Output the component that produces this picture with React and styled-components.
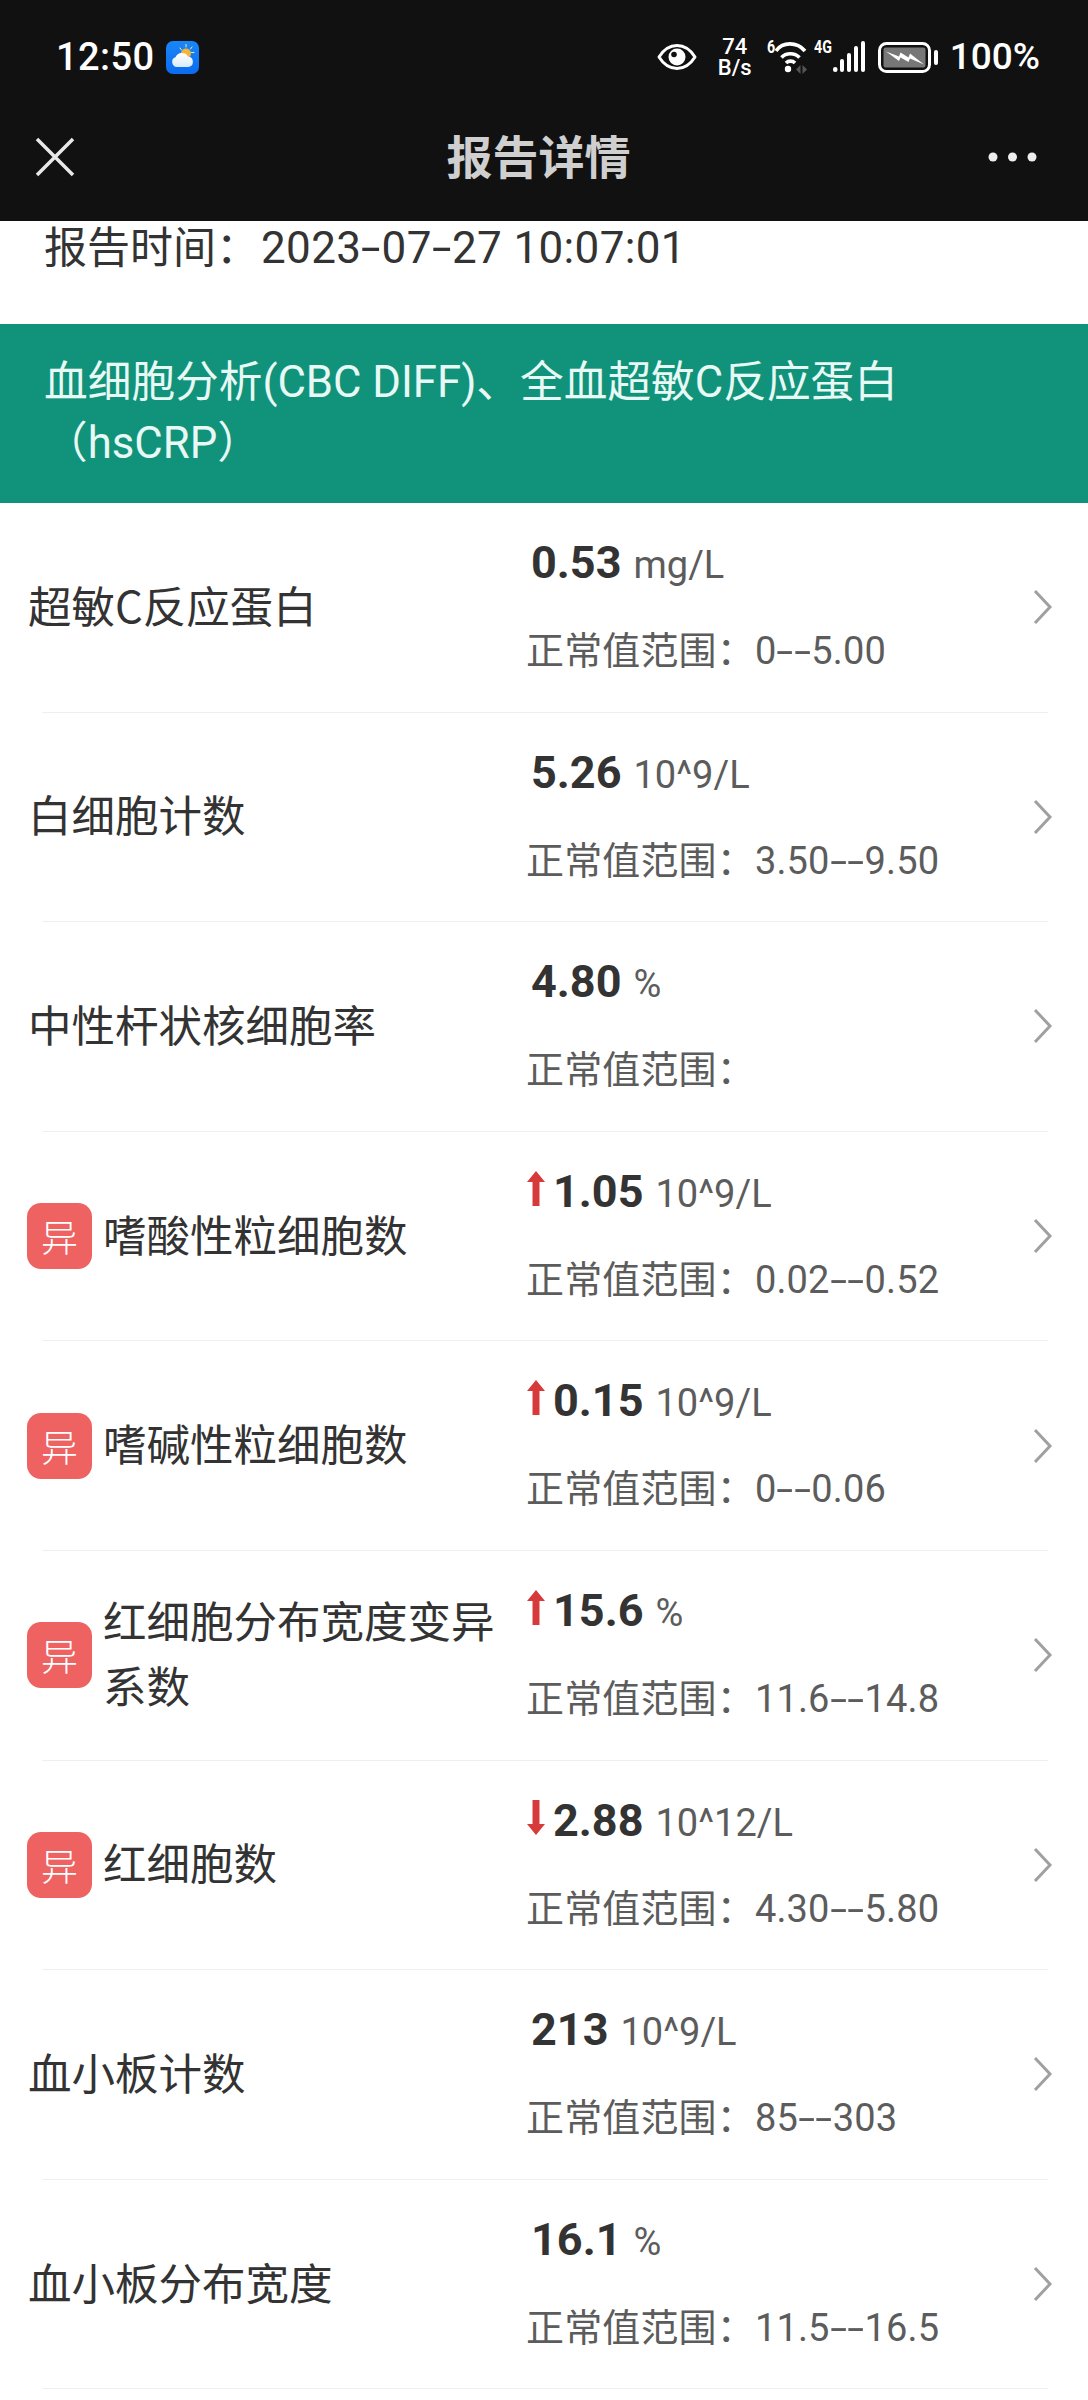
import React from "react";
import styled, { createGlobalStyle } from "styled-components";

const FONT = `Roboto, "Noto Sans CJK SC", sans-serif`;
const CJK = `"Noto Sans CJK SC", sans-serif`;

const Global = createGlobalStyle`
  html, body { margin: 0; padding: 0; background: #fff; }
  body { font-family: ${FONT}; }
  * { box-sizing: border-box; }
`;

const Page = styled.div`
  width: 1088px;
  height: 2400px;
  overflow: hidden;
  background: #fff;
`;

const TopBar = styled.header`
  height: 221px;
  background: #111111;
  display: flex;
  flex-direction: column;
`;

const StatusBar = styled.div`
  height: 113px;
  padding: 34px 48px 0 56px;
  display: flex;
  justify-content: space-between;
  align-items: flex-start;
  color: #fff;
`;

const StatusLeft = styled.div`
  display: flex;
  align-items: center;
  gap: 12px;
  height: 46px;
`;

const Time = styled.span`
  font-size: 38px;
  line-height: 46px;
  font-weight: 500;
  letter-spacing: 0.4px;
`;

const StatusRight = styled.div`
  display: flex;
  align-items: center;
  height: 46px;
`;

const Speed = styled.div`
  width: 36px;
  margin: 0 14px 0 20px;
  display: flex;
  flex-direction: column;
  align-items: center;
  font-size: 22px;
  line-height: 21px;
  font-weight: 500;
`;

const NetLabel = styled.span`
  flex: none;
  width: ${(p) => p.$w}px;
  align-self: flex-start;
  margin-top: 3px;
  font-size: 19px;
  line-height: 20px;
  font-weight: 700;
  white-space: nowrap;
  transform: scaleX(0.75);
  transform-origin: left center;
`;

const Percent = styled.span`
  font-size: 37px;
  line-height: 46px;
  font-weight: 500;
  margin-left: 12px;
`;

const NavBar = styled.nav`
  height: 108px;
  padding: 0 51px 0 35px;
  display: flex;
  align-items: flex-start;
  justify-content: space-between;
`;

const NavTitle = styled.h1`
  margin: 0 0 0 14px;
  font-size: 46px;
  line-height: 60px;
  font-weight: 700;
  color: #cfcfcf;
  padding-top: 11px;
  font-family: ${CJK};
`;

const NavIcon = styled.svg`
  display: block;
  margin-top: 24px;
`;

const ReportTime = styled.div`
  height: 103px;
  padding: 3px 0 0 44px;
  font-size: 43px;
  line-height: 48px;
  color: #333;
  font-weight: 400;
`;

const DateText = styled.span`
  margin-left: 2px;
  font-size: 44px;
  letter-spacing: 0.35px;
`;

const Hyphen = styled.span`
  display: inline-block;
  width: 0.46em;
  text-align: center;
  transform: scaleX(1.6);
`;

const Band = styled.div`
  height: 179px;
  padding: 28px 130px 0 44px;
  background: #10937a;
  color: #e8f8f4;
  font-size: 43.7px;
  line-height: 61px;
`;

const Row = styled.div`
  height: 208.6px;
  padding-left: 28px;
  display: flex;
  align-items: center;
`;

const Separator = styled.div`
  height: 1px;
  margin: 0 40px 0 42px;
  background: #efefef;
`;

const NameCell = styled.div`
  width: 499px;
  padding: 0 20px 6px 0;
  display: flex;
  align-items: center;
  gap: 11px;
  font-size: 43.5px;
  line-height: 65px;
  color: #333;
  font-family: ${CJK};
`;

const Badge = styled.span`
  flex: none;
  width: 65px;
  height: 66px;
  margin: 6px 0 0 -1px;
  border-radius: 14px;
  background: #ee6262;
  color: #fff;
  font-size: 37px;
  font-weight: 300;
  line-height: 66px;
  text-align: center;
  font-family: ${CJK};
`;

const ValueCell = styled.div`
  flex: 1;
  height: 100%;
  padding-top: 35px;
  display: flex;
  flex-direction: column;
`;

const ValueLine = styled.div`
  height: 50px;
  display: flex;
  align-items: baseline;
  padding-left: ${(p) => (p.$flagged ? 0 : 4)}px;
  margin-bottom: 38px;
`;

const Arrow = styled.svg`
  flex: none;
  align-self: flex-start;
  margin: 4px 8px 0 0;
`;

const Number = styled.b`
  font-size: 45px;
  line-height: 50px;
  font-weight: 700;
  color: #333;
`;

const Unit = styled.span`
  margin-left: 12px;
  font-size: 38px;
  line-height: 50px;
  color: #5c5c5c;
`;

const Range = styled.div`
  margin-left: -1px;
  font-size: 38px;
  line-height: 50px;
  letter-spacing: 0.15px;
  color: #5c5c5c;
`;

const Chevron = styled.svg`
  flex: none;
  margin-right: 34px;
`;

const rows = [
  { name: "超敏C反应蛋白", value: "0.53", unit: "mg/L", range: "0--5.00" },
  { name: "白细胞计数", value: "5.26", unit: "10^9/L", range: "3.50--9.50" },
  { name: "中性杆状核细胞率", value: "4.80", unit: "%", range: "" },
  { name: "嗜酸性粒细胞数", value: "1.05", unit: "10^9/L", range: "0.02--0.52", flag: "up" },
  { name: "嗜碱性粒细胞数", value: "0.15", unit: "10^9/L", range: "0--0.06", flag: "up" },
  { name: "红细胞分布宽度变异系数", value: "15.6", unit: "%", range: "11.6--14.8", flag: "up" },
  { name: "红细胞数", value: "2.88", unit: "10^12/L", range: "4.30--5.80", flag: "down" },
  { name: "血小板计数", value: "213", unit: "10^9/L", range: "85--303" },
  { name: "血小板分布宽度", value: "16.1", unit: "%", range: "11.5--16.5" },
];

const withHyphens = (text) =>
  text.split(/(-)/).map((part, i) => (part === "-" ? <Hyphen key={i}>-</Hyphen> : part));

const WeatherIcon = () => (
  <svg width="33" height="33" viewBox="0 0 33 33">
    <defs>
      <linearGradient id="sky" x1="0" y1="0" x2="0" y2="1">
        <stop offset="0" stopColor="#1a86f8" />
        <stop offset="1" stopColor="#0a6cf0" />
      </linearGradient>
      <linearGradient id="cloud" x1="0" y1="0" x2="0" y2="1">
        <stop offset="0" stopColor="#ffffff" />
        <stop offset="1" stopColor="#d9ecfb" />
      </linearGradient>
    </defs>
    <rect width="33" height="33" rx="7" fill="url(#sky)" />
    <g stroke="#ffe9a8" strokeWidth="1" strokeLinecap="round">
      <path d="M14 7l1.500 2M20 3.500v2.500M26 6l-1.500 2M28 11.500h-2.500" />
    </g>
    <circle cx="20" cy="12.500" r="5" fill="#f4b63a" />
    <path d="M11 26a5 5 0 0 1-1.500-9.700A7 7 0 0 1 22 15.500a5.300 5.300 0 0 1 .5 10.500z" fill="url(#cloud)" />
  </svg>
);

const EyeIcon = () => (
  <svg width="40" height="28" viewBox="0 0 40 28">
    <path d="M2 14C7 6 13 2.500 20 2.500S33 6 38 14c-5 8-11 11.500-18 11.500S7 22 2 14z" fill="none" stroke="#fff" strokeWidth="3" strokeLinejoin="round" />
    <circle cx="20" cy="14" r="8.500" fill="#fff" />
    <circle cx="17" cy="11.500" r="2.800" fill="#111" />
  </svg>
);

const WifiIcon = () => (
  <svg width="39" height="34" viewBox="0 0 39 34">
    <g fill="none" stroke="#fff" strokeWidth="3.600">
      <path d="M1 11C7.500 1.500 22 1.500 30 11" />
      <path d="M6.500 17.500c4.500-5 13-5 18 0" />
      <path d="M11 23c2.500-2.500 6.500-2.500 9 0" />
    </g>
    <circle cx="13" cy="29" r="3.200" fill="#fff" />
    <path d="M21 29.500l4.500-4.500v9zM27.500 25l4.500 4.500-4.500 4.500z" fill="#555" />
  </svg>
);

const SignalIcon = () => (
  <svg width="34" height="34" viewBox="0 0 34 34">
    <g fill="#fff">
      <rect x="1" y="27" width="4.500" height="5" rx="2.200" />
      <rect x="8" y="19" width="4" height="13" rx="2" />
      <rect x="15" y="13" width="4" height="19" rx="2" />
      <rect x="22" y="6" width="4" height="26" rx="2" />
      <rect x="29" y="1" width="4" height="31" rx="2" />
    </g>
  </svg>
);

const BatteryIcon = () => (
  <svg width="60" height="31" viewBox="0 0 60 31" style={{ marginLeft: 12 }}>
    <rect x="1.500" y="1.500" width="50" height="28" rx="7" fill="none" stroke="#fff" strokeWidth="3" />
    <rect x="5.500" y="5.500" width="42" height="20" rx="2" fill="#777" />
    <path d="M8 9.500l13 5 1.500-4 8 5 1.500-4 14 11-14-6-1.500 3.500-8-4.500-1.500 3.500z" fill="#fff" />
    <rect x="56" y="8" width="4" height="15" rx="2" fill="#fff" />
  </svg>
);

export default function App() {
  return (
    <Page>
      <Global />
      <TopBar>
        <StatusBar>
          <StatusLeft>
            <Time>12:50</Time>
            <WeatherIcon />
          </StatusLeft>
          <StatusRight>
            <EyeIcon />
            <Speed>
              <span>74</span>
              <span>B/s</span>
            </Speed>
            <NetLabel $w={8}>6</NetLabel>
            <WifiIcon />
            <NetLabel $w={18}>4G</NetLabel>
            <SignalIcon />
            <BatteryIcon />
            <Percent>100%</Percent>
          </StatusRight>
        </StatusBar>
        <NavBar>
          <NavIcon width="40" height="40" viewBox="0 0 40 40">
            <path d="M2 2l36 36M38 2L2 38" stroke="#e8e8e8" strokeWidth="3.500" fill="none" />
          </NavIcon>
          <NavTitle>报告详情</NavTitle>
          <NavIcon width="49" height="40" viewBox="0 0 49 40">
            <circle cx="5" cy="20" r="4.500" fill="#eee" />
            <circle cx="24.500" cy="20" r="4.500" fill="#eee" />
            <circle cx="44" cy="20" r="4.500" fill="#eee" />
          </NavIcon>
        </NavBar>
      </TopBar>
      <ReportTime>
        报告时间：<DateText>{withHyphens("2023-07-27")} 10:07:01</DateText>
      </ReportTime>
      <Band>血细胞分析(CBC DIFF)、全血超敏C反应蛋白（hsCRP）</Band>
      {rows.map((r) => (
        <React.Fragment key={r.name}>
          <Row>
            <NameCell>
              {r.flag && <Badge>异</Badge>}
              <span>{r.name}</span>
            </NameCell>
            <ValueCell>
              <ValueLine $flagged={!!r.flag}>
                {r.flag && (
                  <Arrow width="18" height="35" viewBox="0 0 18 35">
                    <path
                      d={r.flag === "up" ? "M9 0l9 11h-5.500v24h-7V11H0z" : "M9 35L0 24h5.500V0h7v24H18z"}
                      fill="#d73a3a"
                    />
                  </Arrow>
                )}
                <Number>{r.value}</Number>
                <Unit>{r.unit}</Unit>
              </ValueLine>
              <Range>正常值范围：{withHyphens(r.range)}</Range>
            </ValueCell>
            <Chevron width="22" height="36" viewBox="0 0 22 36">
              <path d="M3 2l15 16L3 34" fill="none" stroke="#a0a0a0" strokeWidth="3" />
            </Chevron>
          </Row>
          <Separator />
        </React.Fragment>
      ))}
    </Page>
  );
}
